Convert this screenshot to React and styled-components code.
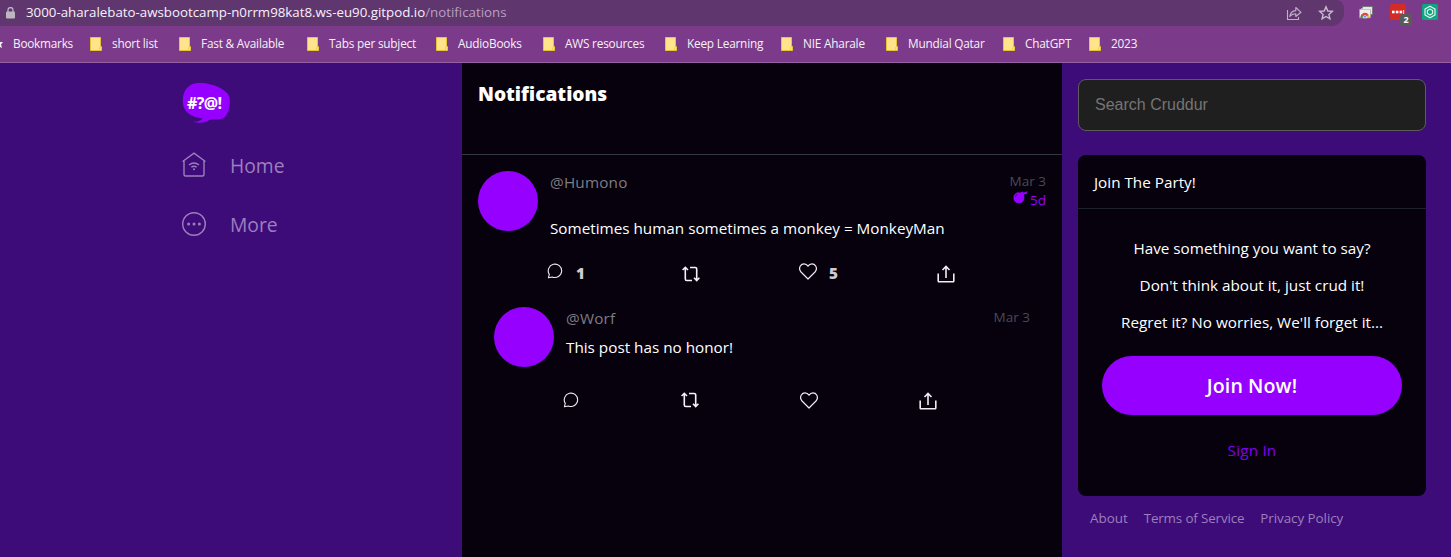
import React from "react";
import styled, { createGlobalStyle } from "styled-components";

const Global = createGlobalStyle`
  * { box-sizing: border-box; }
  html, body { margin: 0; height: 100%; overflow: hidden; }
  body { font-family: "Open Sans", "Noto Sans", sans-serif; background: #3d0c79; color: #fff; }
`;

const Page = styled.div`
  width: 1451px; height: 557px; display: flex; flex-direction: column; overflow: hidden;
`;
const Text = styled.span`
  font-size: ${(p) => p.$size || 15.28}px;
  letter-spacing: ${(p) => p.$ls || 0}px;
  white-space: nowrap;
`;

/* Browser chrome */
const Browser = styled.header`
  height: 63px; flex: none; background: #7c3b8a; border-bottom: 1px solid #9660a3;
`;
const Toolbar = styled.div`
  height: 26px; display: flex; align-items: flex-start;
`;
const Address = styled.div`
  width: 1344px; height: 26px; padding: 0 10px 0 6px; background: #60366f;
  border-radius: 0 8px 13px 0;
  display: flex; align-items: center;
`;
const Url = styled(Text)`
  margin-left: 11px; flex: 1; color: #f7f1f9; line-height: 23px; height: 25px;
  em { font-style: normal; color: #b7a0c0; }
`;
const AddressIcons = styled.div`
  display: flex; gap: 16px; align-items: center; height: 24px;
`;
const Extensions = styled.div`
  display: flex; gap: 16px; padding: 4px 0 0 14px;
`;
const Blocker = styled.div`
  position: relative; width: 16px; height: 16px; border-radius: 2px; background: #d52b27;
  display: flex; align-items: center; justify-content: center;
`;
const Count = styled.b`
  position: absolute; left: 10px; top: 10px; width: 12px; height: 12px; border-radius: 2px;
  background: #5a5a5a; font-size: 9px; line-height: 12px; text-align: center;
`;
const Bookmarks = styled.nav`
  height: 36px; display: flex; align-items: center; padding-bottom: 1px;
`;
const Bookmark = styled.div`
  width: ${(p) => p.$w}px; flex: none; display: flex; align-items: center; gap: 10px; color: #f7f1f9;
`;
const BookmarkLabel = styled(Text)` line-height: 16px; height: 17px; `;

/* Application */
const Main = styled.main` flex: 1; display: flex; min-height: 0; `;
const SideNav = styled.aside`
  width: 462px; flex: none; padding: 20px 0 0 182px; background: #3d0c79;
`;
const NavLink = styled.a`
  display: flex; align-items: center; gap: 24px; height: 30px; margin-top: ${(p) => p.$mt}px; color: #9c7fbd;
`;
const Content = styled.section`
  width: 600px; flex: none; background: #06010d;
`;
const Heading = styled.div`
  height: 92px; padding: 17px 16px; border-bottom: 1px solid #303942;
  font-weight: 800; line-height: 28px;
`;
const Activity = styled.article`
  padding: ${(p) => (p.$reply ? "0 32px" : "16px 16px 0")};
  height: ${(p) => (p.$reply ? 110 : 152)}px;
`;
const Headline = styled.div` display: flex; height: ${(p) => p.$h}px; margin-top: ${(p) => p.$offset || 0}px; `;
const Avatar = styled.div`
  width: 60px; height: 60px; border-radius: 50%; background: #9500ff; flex: none;
`;
const Body = styled.div`
  flex: 1; margin-left: 12px; display: flex; flex-direction: column;
`;
const Meta = styled.div`
  display: flex; justify-content: space-between; height: ${(p) => p.$h}px; color: #7f7c85;
  line-height: 22px;
`;
const Times = styled.div`
  display: flex; flex-direction: column; align-items: flex-end; color: #4a4956; line-height: 20px;
`;
const Expires = styled.div`
  display: flex; gap: 2px; color: #9500ff; line-height: 19px; height: 19px;
`;
const Message = styled.div` line-height: 22px; height: 24px; display: flex; `;
const Actions = styled.div`
  display: flex; padding-left: ${(p) => p.$pl}px;
`;
const Action = styled.div`
  width: ${(p) => p.$w}px; padding-top: ${(p) => p.$top || 0}px; height: 24px;
  display: flex; align-items: flex-start; gap: 12px;
  svg { flex: none; }
`;
const Counter = styled(Text)`
  font-weight: 800; color: #cfcad3; line-height: 18px; padding-top: 1px;
`;

const Aside = styled.aside`
  flex: 1; padding: 16px 25px 0 16px; background: #3d0c79;
`;
const Search = styled.input`
  display: block; width: 348px; height: 52px; padding: 0 16px; border-radius: 8px;
  border: 1px solid #5c5c5c; background: #1f1f1f; font: 16px "Liberation Sans", sans-serif; outline: none;
  &::placeholder { color: #757575; opacity: 1; }
`;
const Card = styled.div`
  margin-top: 24px; height: 341px; border-radius: 8px; background: #06010d; overflow: hidden;
`;
const CardTitle = styled.div`
  height: 54px; line-height: 54px; padding-left: 16px; border-bottom: 1px solid #1b222e;
`;
const CardBody = styled.div`
  padding: 21px 24px 0; display: flex; flex-direction: column; align-items: center;
`;
const Line = styled.p` margin: 0; height: 37px; line-height: 37px; `;
const JoinButton = styled.button`
  width: 300px; height: 59px; margin-top: 15px; border: 0; border-radius: 30px; background: #9500ff;
  color: #fff; font-family: inherit; font-weight: 600; padding: 0;
`;
const SignIn = styled.a` margin-top: 23px; line-height: 24px; color: #8200f2; `;
const Footer = styled.footer`
  display: flex; gap: 16px; padding: 12px 0 0 12px; color: #9c7fbd; line-height: 20px;
`;

const Lock = () => (
  <svg width="9" height="12" viewBox="0 0 9 12">
    <path d="M2 5V3a2.5 2.5 0 0 1 5 0v2" fill="none" stroke="#bdb8c0" strokeWidth="1.3" />
    <rect y="4.5" width="9" height="7" rx="1" fill="#bdb8c0" />
  </svg>
);
const ShareOut = () => (
  <svg width="16" height="16" viewBox="0 0 16 16" fill="none" stroke="#c0b0c7" strokeWidth="1.1">
    <path d="M1.5 5v9.500H12.500V12" />
    <path d="M3.800 11.500C4.300 7.500 6.500 5.800 9.800 5.600V2.500L15 7.300 9.800 11.500V8.700C7 8.700 5 9.700 3.800 11.500z" strokeLinejoin="round" />
  </svg>
);
const Star = () => (
  <svg width="16" height="16" viewBox="0 0 16 16">
    <path d="M8 1.800l1.800 4.200 4.500.4-3.400 3 1 4.500L8 11.500l-3.900 2.400 1-4.500-3.400-3 4.500-.4z" fill="none" stroke="#c9bccf" strokeWidth="1.400" />
  </svg>
);
const WindowIcon = () => (
  <svg width="16" height="16" viewBox="0 0 16 16">
    <path d="M4.500 2.500h10v8h-10z" fill="#e5e5e5" stroke="#777" />
    <path d="M3 4.500h10.500v2H3z" fill="#fff" />
    <path d="M1.500 5.300h11v8.500h-11z" fill="#eee" stroke="#999" strokeWidth=".6" />
    <path d="M2.500 13.800a4.500 5 0 0 1 9 0z" fill="#df4939" />
    <path d="M2.500 13.800a4.500 5 0 0 1 1.200-3.300l2 3.300z" fill="#2a9c57" />
    <path d="M11.500 13.800a4.500 5 0 0 0-1.200-3.300l-2 3.300z" fill="#f5c344" />
    <path d="M5 13.800a2 2.200 0 0 1 4 0z" fill="#3e7ce0" stroke="#fff" strokeWidth=".7" />
  </svg>
);
const Dots = () => (
  <svg width="14" height="4" viewBox="0 0 14 4" fill="#fff">
    <rect x="1" y=".7" width="2.600" height="2.600" /><rect x="4.800" y=".7" width="2.600" height="2.600" />
    <rect x="8.600" y=".7" width="2.600" height="2.600" /><rect x="12.300" y="0" width=".8" height="4" />
  </svg>
);
const Knot = () => (
  <svg width="16" height="16" viewBox="0 0 16 16" fill="none" stroke="#e3f7f0">
    <rect width="16" height="16" rx="1.500" fill="#10a37f" stroke="none" />
    <path d="M8 2.200l5 2.900v5.800l-5 2.900-5-2.900V5.100z" strokeWidth="1.200" strokeLinejoin="round" />
    <path d="M8 5l2.600 1.500v3L8 11 5.400 9.500v-3z" strokeWidth="1.100" strokeLinejoin="round" />
  </svg>
);
const Folder = () => (
  <svg width="12" height="14" viewBox="0 0 12 14">
    <path d="M.5.500h10V9.500h1v4H.5z" fill="#ffe48c" stroke="#e9c235" />
    <path d="M9.500 13V10" fill="none" stroke="#f2d05a" />
  </svg>
);
const HalfStar = () => (
  <svg width="3" height="12" viewBox="0 0 3 12"><path d="M0 4h3L1 6.500 2 10 0 9z" fill="#f7f1f9" /></svg>
);
const LogoText = styled.span`
  position: absolute; left: 5px; top: 10px; line-height: 20px; font-weight: 700; font-size: 16px; letter-spacing: -0.6px;
`;
const LogoBox = styled.div` position: relative; width: 48px; height: 40px; `;
const Logo = () => (
  <LogoBox>
    <svg width="48" height="40" viewBox="0 0 48 40">
      <path d="M16 0C29-.5 41 5 46 11c2.500 4 2.300 11 .5 16-2 7-5 9.500-12 9.500-3 0-5-.2-7 .5-4 2.500-9 4-16 1.700 4-.2 8-1.200 9-3.200C9 34 1 29 .8 19 .3 8 6 .6 16 0z" fill="#9500ff" />
    </svg>
    <LogoText>#?@!</LogoText>
  </LogoBox>
);
const HomeIcon = () => (
  <svg width="24" height="26" viewBox="0 0 24 26" fill="none" stroke="#9c7fbd" strokeWidth="1.400">
    <path d="M.6 9.500L12 1.200l11.400 8.300M2 8.600V22.500a1.500 1.500 0 0 0 1.500 1.500h17a1.500 1.500 0 0 0 1.500-1.500V8.600" />
    <path d="M7 13q5-4 10 0M9.300 15.300q2.700-2.200 5.400 0" />
    <circle cx="12" cy="17.300" r="1" fill="#9c7fbd" stroke="none" />
  </svg>
);
const MoreIcon = () => (
  <svg width="24" height="24" viewBox="0 0 24 24">
    <circle cx="12" cy="12" r="11.300" fill="none" stroke="#9c7fbd" strokeWidth="1.400" />
    <g fill="#9c7fbd"><circle cx="6.600" cy="12" r="1.500" /><circle cx="12" cy="12" r="1.500" /><circle cx="17.400" cy="12" r="1.500" /></g>
  </svg>
);
const Bomb = () => (
  <svg width="15" height="13" viewBox="0 0 15 13" fill="#9500ff">
    <circle cx="5.900" cy="6.800" r="5.500" />
    <path d="M7 2L9.300.6l1.400 1L14.800.3 13.300 3.300l-2-.2-.2 2.200z" />
    <path d="M2.300 6q.3-1.900 2.200-2.700" fill="none" stroke="#3d0868" strokeWidth=".9" />
  </svg>
);
const Bubble = () => (
  <svg width="17" height="16" viewBox="-.5 0 17 16" fill="none" stroke="#f0edf2" strokeWidth="1.100">
    <path d="M1.800 11.400A6.700 6.700 0 1 1 4.900 14L.9 14.800z" strokeLinejoin="round" />
  </svg>
);
const Repost = () => (
  <svg width="18" height="16" viewBox="0 0 18 16" fill="none" stroke="#f5f3f6" strokeWidth="1.600">
    <path d="M.6 4L3.300 1.300 6 4M3.300 1.500V13a1.500 1.500 0 0 0 1.500 1.500H10" />
    <path d="M12 11.800l2.700 2.700 2.700-2.700M14.700 14.300V3a1.500 1.500 0 0 0-1.500-1.500H8" />
  </svg>
);
const Heart = () => (
  <svg width="18" height="17" viewBox="0 0 18 17">
    <path d="M9 16L2 9C.5 7.300.2 5 1.300 3 3 .3 7 .1 9 3.200 11 .1 15 .3 16.700 3c1.100 2 .8 4.300-.7 6z" fill="none" stroke="#f0edf2" strokeWidth="1.200" strokeLinejoin="round" />
  </svg>
);
const Upload = () => (
  <svg width="18" height="18" viewBox="0 0 18 18" fill="none" stroke="#f0edf2" strokeWidth="1.600">
    <path d="M1.200 8.500V16a.8.8 0 0 0 .8.8h14a.8.8 0 0 0 .8-.8V8.500M9 13V1.500M5.500 5L9 1.500 12.500 5" />
  </svg>
);

const BOOKMARKS = [
  ["short list", 89], ["Fast & Available", 128], ["Tabs per subject", 129], ["AudioBooks", 107],
  ["AWS resources", 122], ["Keep Learning", 116], ["NIE Aharale", 105], ["Mundial Qatar", 117],
  ["ChatGPT", 86], ["2023", 80],
];

export default function App() {
  return (
    <Page>
      <Global />
      <Browser>
        <Toolbar>
          <Address>
            <Lock />
            <Url $size={13.3}>3000-aharalebato-awsbootcamp-n0rrm98kat8.ws-eu90.gitpod.io<em>/notifications</em></Url>
            <AddressIcons><ShareOut /><Star /></AddressIcons>
          </Address>
          <Extensions>
            <WindowIcon />
            <Blocker><Dots /><Count>2</Count></Blocker>
            <Knot />
          </Extensions>
        </Toolbar>
        <Bookmarks>
          <Bookmark $w={90}><HalfStar /><BookmarkLabel $size={11.8} $ls={-0.24}>Bookmarks</BookmarkLabel></Bookmark>
          {BOOKMARKS.map(([label, w]) => (
            <Bookmark key={label} $w={w}><Folder /><BookmarkLabel $size={11.8} $ls={-0.2}>{label}</BookmarkLabel></Bookmark>
          ))}
        </Bookmarks>
      </Browser>
      <Main>
        <SideNav>
          <Logo />
          <NavLink $mt={27}><HomeIcon /><Text $size={19.3}>Home</Text></NavLink>
          <NavLink $mt={29}><MoreIcon /><Text $size={19.3}>More</Text></NavLink>
        </SideNav>
        <Content>
          <Heading><Text $size={19.1}>Notifications</Text></Heading>
          <Activity>
            <Headline $h={92}>
              <Avatar />
              <Body>
                <Meta $h={46}>
                  <Text $ls={0.2}>@Humono</Text>
                  <Times>
                    <Text $size={13.5}>Mar 3</Text>
                    <Expires><Bomb /><Text $size={13.5}>5d</Text></Expires>
                  </Times>
                </Meta>
                <Message><Text>Sometimes human sometimes a monkey = MonkeyMan</Text></Message>
              </Body>
            </Headline>
            <Actions $pl={69}>
              <Action $w={135}><Bubble /><Counter>1</Counter></Action>
              <Action $w={117} $top={3}><Repost /></Action>
              <Action $w={138}><Heart /><Counter>5</Counter></Action>
              <Action $w={18} $top={2}><Upload /></Action>
            </Actions>
          </Activity>
          <Activity $reply>
            <Headline $h={85}>
              <Avatar />
              <Body>
                <Meta $h={29}>
                  <Text $ls={0.2}>@Worf</Text>
                  <Times><Text $size={13.5}>Mar 3</Text></Times>
                </Meta>
                <Message><Text>This post has no honor!</Text></Message>
              </Body>
            </Headline>
            <Actions $pl={69}>
              <Action $w={118}><Bubble /></Action>
              <Action $w={119}><Repost /></Action>
              <Action $w={119}><Heart /></Action>
              <Action $w={18}><Upload /></Action>
            </Actions>
          </Activity>
        </Content>
        <Aside>
          <Search placeholder="Search Cruddur" />
          <Card>
            <CardTitle><Text>Join The Party!</Text></CardTitle>
            <CardBody>
              <Line><Text>Have something you want to say?</Text></Line>
              <Line><Text>Don't think about it, just crud it!</Text></Line>
              <Line><Text>Regret it? No worries, We'll forget it...</Text></Line>
              <JoinButton><Text $size={19.6} $ls={0.1}>Join Now!</Text></JoinButton>
              <SignIn><Text $ls={0.2}>Sign In</Text></SignIn>
            </CardBody>
          </Card>
          <Footer>
            <Text $size={13.4} $ls={0}>About</Text>
            <Text $size={13.4} $ls={-0.15}>Terms of Service</Text>
            <Text $size={13.4} $ls={-0.05}>Privacy Policy</Text>
          </Footer>
        </Aside>
      </Main>
    </Page>
  );
}
